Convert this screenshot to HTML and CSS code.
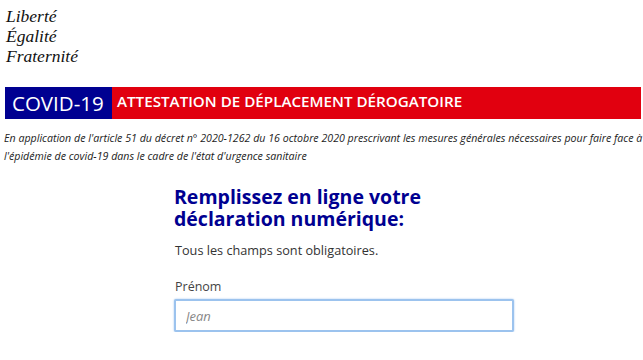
FILE: index.html
```html
<!DOCTYPE html>
<html lang="fr">
<head>
    <meta charset="UTF-8">
    <meta name="viewport" content="width=device-width, initial-scale=1.0">
    <title>Attestation de déplacement dérogatoire</title>
    <link rel="stylesheet" href="styles.css">
</head>
<body>
    <header class="site-header">
        <div class="logo-strip"></div>
        <p class="motto">Liberté<br>Égalité<br>Fraternité</p>
        <div class="banner">
            <span class="banner-tag">COVID-19</span>
            <h1 class="banner-title">ATTESTATION DE DÉPLACEMENT DÉROGATOIRE</h1>
        </div>
        <p class="legal">En application de l'article 51 du décret n° 2020-1262 du 16 octobre 2020 prescrivant les mesures générales nécessaires pour faire face à l'épidémie de covid-19 dans le cadre de l'état d'urgence sanitaire</p>
    </header>
    <main class="form-wrap">
        <h2 class="form-title">Remplissez en ligne votre déclaration numérique:</h2>
        <p class="form-note">Tous les champs sont obligatoires.</p>
        <div class="field">
            <label for="firstname">Prénom</label>
            <input id="firstname" type="text" placeholder="Jean" autofocus>
        </div>
    </main>
</body>
</html>
```

FILE: styles.css
```css
:root {
    --blue: #000091; --red: #e1000f; --text: #333;
    --focus: #9cc3ee;
}
body {
    margin: 0; font-family: "Open Sans", "Liberation Sans", sans-serif;
    color: var(--text); background: #fff;
}
.site-header { padding: 0 2px 0 5px; }
.logo-strip { height: 6px; }
.motto {
    margin: 0 0 0 1px; font-family: "Liberation Serif", serif; font-style: italic;
    font-size: 17.5px; line-height: 20px; color: #111;
}
.banner { display: flex; height: 32px; margin-top: 21px; }
.banner-tag {
    background: var(--blue); color: #fff; font-size: 20.5px; line-height: 32px;
    padding: 0 6px 0 7px; width: 94px;
}
.banner-title {
    flex: 1; margin: 0; background: var(--red); color: #fff; font-size: 15.2px;
    font-weight: 600; line-height: 29px; padding-left: 5px;
}
.legal {
    margin: 10px -2px 0 -1px; font-size: 10.65px; font-style: italic; line-height: 18px; color: #222;
}
.form-wrap { margin: 21px 0 0 174px; width: 340px; }
.form-title {
    margin: 0; color: var(--blue); font-size: 19.5px; font-weight: 700; line-height: 22px;
}
.form-note { margin: 11px 0 0 1px; font-size: 12.7px; }
.field { margin-top: 19px; display: flex; flex-direction: column; gap: 4px; }
.field label { font-size: 12.5px; color: #444; padding-left: 1px; }
.field input {
    height: 33px; box-sizing: border-box; border: 2px solid var(--focus);
    box-shadow: 0 0 2px var(--focus); border-radius: 2px; outline: none;
    padding: 0 10px; font-family: inherit; font-size: 13px; width: 340px;
}
.field input::placeholder { color: #888; font-style: italic; }
```
